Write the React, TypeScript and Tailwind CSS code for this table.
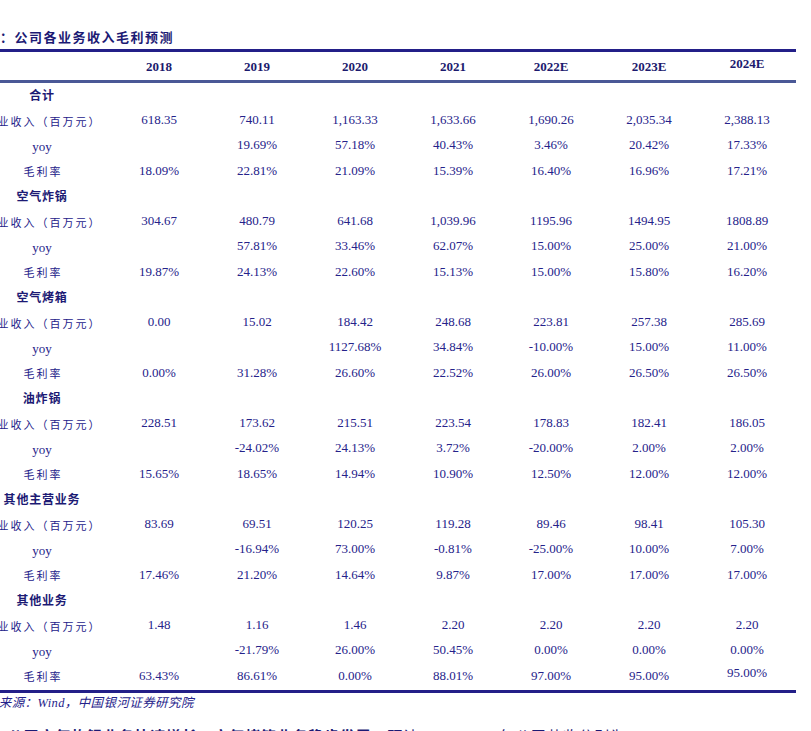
import React from 'react';

type Row = { label: string; kind: 'section' | 'cn' | 'yoy'; values?: string[] };

const years = ['2018', '2019', '2020', '2021', '2022E', '2023E', '2024E'];

const block = (name: string, rev: string[], yoy: string[], gm: string[]): Row[] => [
    { label: name, kind: 'section' },
    { label: '营业收入（百万元）', kind: 'cn', values: rev },
    { label: 'yoy', kind: 'yoy', values: yoy },
    { label: '毛利率', kind: 'cn', values: gm },
];

const rows: Row[] = [
    ...block('合计',
        ['618.35', '740.11', '1,163.33', '1,633.66', '1,690.26', '2,035.34', '2,388.13'],
        ['', '19.69%', '57.18%', '40.43%', '3.46%', '20.42%', '17.33%'],
        ['18.09%', '22.81%', '21.09%', '15.39%', '16.40%', '16.96%', '17.21%']),
    ...block('空气炸锅',
        ['304.67', '480.79', '641.68', '1,039.96', '1195.96', '1494.95', '1808.89'],
        ['', '57.81%', '33.46%', '62.07%', '15.00%', '25.00%', '21.00%'],
        ['19.87%', '24.13%', '22.60%', '15.13%', '15.00%', '15.80%', '16.20%']),
    ...block('空气烤箱',
        ['0.00', '15.02', '184.42', '248.68', '223.81', '257.38', '285.69'],
        ['', '', '1127.68%', '34.84%', '-10.00%', '15.00%', '11.00%'],
        ['0.00%', '31.28%', '26.60%', '22.52%', '26.00%', '26.50%', '26.50%']),
    ...block('油炸锅',
        ['228.51', '173.62', '215.51', '223.54', '178.83', '182.41', '186.05'],
        ['', '-24.02%', '24.13%', '3.72%', '-20.00%', '2.00%', '2.00%'],
        ['15.65%', '18.65%', '14.94%', '10.90%', '12.50%', '12.00%', '12.00%']),
    ...block('其他主营业务',
        ['83.69', '69.51', '120.25', '119.28', '89.46', '98.41', '105.30'],
        ['', '-16.94%', '73.00%', '-0.81%', '-25.00%', '10.00%', '7.00%'],
        ['17.46%', '21.20%', '14.64%', '9.87%', '17.00%', '17.00%', '17.00%']),
    ...block('其他业务',
        ['1.48', '1.16', '1.46', '2.20', '2.20', '2.20', '2.20'],
        ['', '-21.79%', '26.00%', '50.45%', '0.00%', '0.00%', '0.00%'],
        ['63.43%', '86.61%', '0.00%', '88.01%', '97.00%', '95.00%', '95.00%']),
];

const serif = "font-['Liberation_Serif','Noto_Sans_CJK_SC',serif]";
const cjk = "font-['Noto_Sans_CJK_SC',sans-serif]";

export default function App() {
    return (
        <div className="w-[811px] h-[731px] overflow-hidden bg-white text-[#25228a]">
            {/* 标题 */}
            <div className={`${cjk} pt-[28px] h-[49px] text-[13px] leading-[17px] font-bold tracking-[1.5px] text-[#1c1a74] whitespace-nowrap`}>
                ：公司各业务收入毛利预测
            </div>

            <div className="ml-[-26px] w-[822px]">
                <div className="h-[3px] bg-[#231f88]" />
                <div className={`${serif} flex h-[28px] items-center text-[13px] font-bold text-[#1c1a6e]`}>
                    <div className="w-[136px]" />
                    {years.map((y, i) => (
                        <div key={y} className={`w-[98px] text-center ${i === 6 ? 'mb-[5px]' : 'mt-[1px]'}`}>{y}</div>
                    ))}
                </div>
                <div className="h-[3px] bg-[#4a5896]" />

                <div className="mt-[-1px]">
                    {rows.map((r, idx) => (
                        <div key={idx} className="flex h-[25.25px] items-center">
                            <div className="w-[136px] text-center whitespace-nowrap">
                                {r.kind === 'section' && (
                                    <span className={`${cjk} text-[12px] font-bold tracking-[0.8px] text-[#1c1a74] relative top-[-1px]`}>{r.label}</span>
                                )}
                                {r.kind === 'cn' && (
                                    <span className={`${cjk} text-[11px] tracking-[2px] pl-[2px]`}>{r.label}</span>
                                )}
                                {r.kind === 'yoy' && (
                                    <span className={`${serif} text-[13px]`}>{r.label}</span>
                                )}
                            </div>
                            {r.values?.map((v, i) => (
                                <div
                                    key={i}
                                    className={`${serif} w-[98px] text-center text-[13px] ${idx === rows.length - 1 && i === 6 ? 'mb-[5px]' : ''}`}
                                >
                                    {v}
                                </div>
                            ))}
                        </div>
                    ))}
                </div>

                <div className="mt-[2px] h-[3px] bg-[#231f88]" />
            </div>

            {/* 资料来源 */}
            <div className={`${cjk} ml-[-27px] text-[12.5px] leading-[17px] italic tracking-[0.4px] whitespace-nowrap`}>
                资料来源：<span className={serif}>Wind</span>，中国银河证券研究院
            </div>

            <div className={`${cjk} mt-[14px] ml-[8px] text-[15px] leading-[20px] tracking-[0.8px] whitespace-nowrap text-[#1c1a74]`}>
                <span className="font-bold">公司空气炸锅业务快速增长，空气烤箱业务稳步发展。</span>
                预计 <span className={serif}>2022-2024</span> 年公司营收分别为
            </div>
        </div>
    );
}
